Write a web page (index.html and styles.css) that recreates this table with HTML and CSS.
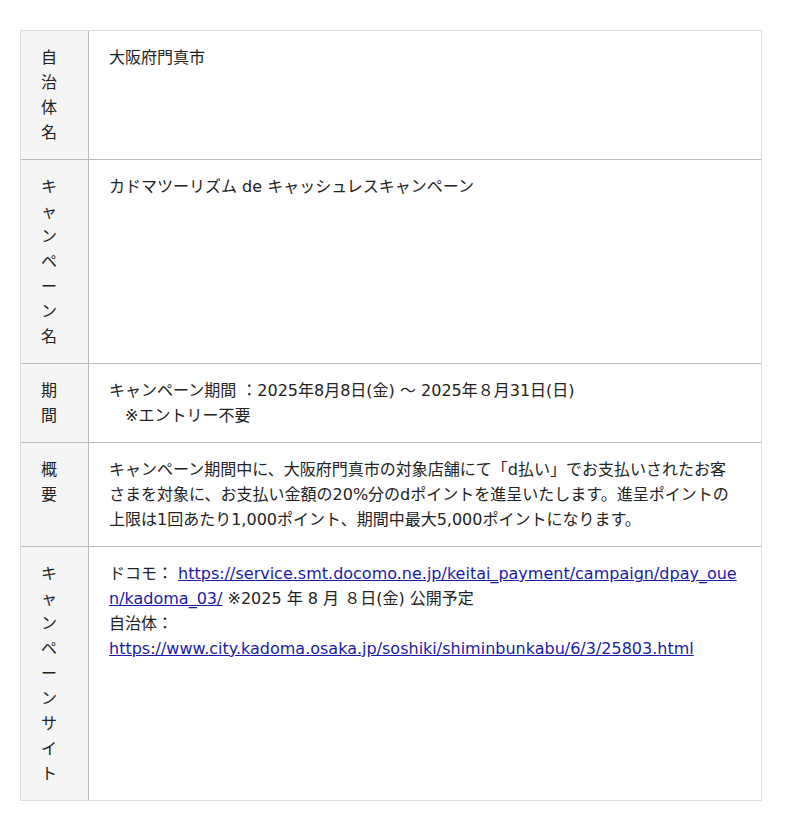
FILE: index.html
```html
<!doctype html>
<html lang="ja">
<head>
    <meta charset="UTF-8">
    <meta name="viewport" content="width=device-width,initial-scale=1.0">
    <title>カドマツーリズム de キャッシュレスキャンペーン</title>
    <link rel="stylesheet" href="styles.css">
</head>
<body>
    <div class="wrap">
        <table class="info">
            <tr>
                <th>自治体名</th>
                <td>大阪府門真市</td>
            </tr>
            <tr>
                <th>キャンペーン名</th>
                <td>カドマツーリズム de キャッシュレスキャンペーン</td>
            </tr>
            <tr>
                <th>期間</th>
                <td>キャンペーン期間 ：2025年8月8日(金) ～ 2025年８月31日(日)<br>　※エントリー不要</td>
            </tr>
            <tr>
                <th>概要</th>
                <td>キャンペーン期間中に、大阪府門真市の対象店舗にて「d払い」でお支払いされたお客さまを対象に、お支払い金額の20%分のdポイントを進呈いたします。進呈ポイントの上限は1回あたり1,000ポイント、期間中最大5,000ポイントになります。</td>
            </tr>
            <tr>
                <th>キャンペーンサイト</th>
                <td>ドコモ： <a class="url" href="#">https://service.smt.docomo.ne.jp/keitai_payment/campaign/dpay_ouen/kadoma_03/</a> ※2025 年 8 月 ８日(金) 公開予定<br>自治体：<br><a class="url" href="#">https://www.city.kadoma.osaka.jp/soshiki/shiminbunkabu/6/3/25803.html</a></td>
            </tr>
        </table>
    </div>
</body>
</html>
```

FILE: styles.css
```css
body {
    margin: 0;
    background: #fff;
    color: #222;
    font-family: "DejaVu Sans", "Noto Sans CJK JP", sans-serif;
    font-size: 16px;
    line-height: 25px;
}

.wrap {
    padding: 30px 20px;
}

.info {
    width: 742px;
    table-layout: fixed;
    border-collapse: separate;
    border-spacing: 0;
    border: 1px solid #ddd;
}

.info th,
.info td {
    padding: 14px 20px;
    vertical-align: top;
    text-align: left;
}

.info th {
    width: 27px;
    background: #f5f5f5;
    border-right: 1px solid #bbb;
    font-weight: normal;
}

.info tr + tr th,
.info tr + tr td {
    border-top: 1px solid #bbb;
}

.url {
    color: #1a1aa6;
    text-decoration: underline;
    word-break: break-all;
}
```
